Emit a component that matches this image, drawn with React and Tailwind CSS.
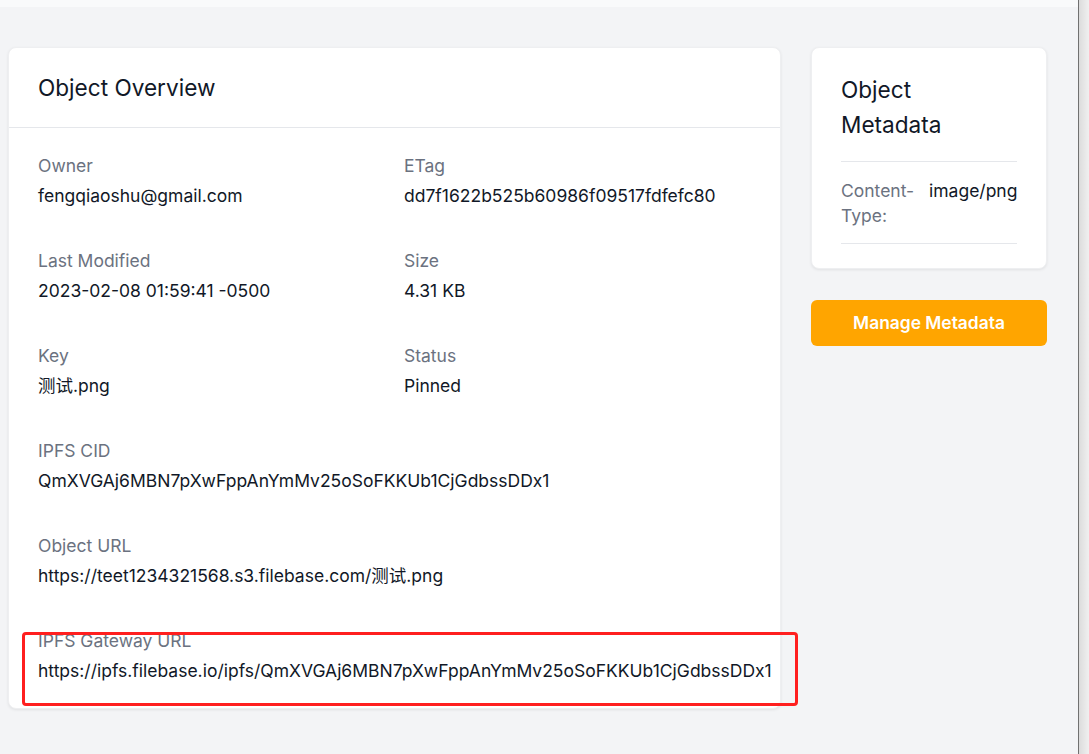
export default function App() {
  const fields = [
    ["Owner", "fengqiaoshu@gmail.com"],
    ["ETag", "dd7f1622b525b60986f09517fdfefc80"],
    ["Last Modified", "2023-02-08 01:59:41 -0500"],
    ["Size", "4.31 KB"],
    ["Key", "测试.png"],
    ["Status", "Pinned"],
  ];
  const wide = [
    ["IPFS CID", "QmXVGAj6MBN7pXwFppAnYmMv25oSoFKKUb1CjGdbssDDx1"],
    ["Object URL", "https://teet1234321568.s3.filebase.com/测试.png"],
    ["IPFS Gateway URL", "https://ipfs.filebase.io/ipfs/QmXVGAj6MBN7pXwFppAnYmMv25oSoFKKUb1CjGdbssDDx1"],
  ];
  return (
    <div
      className="flex w-full h-[754px] overflow-hidden text-[17.5px] leading-[24px] text-[#111827]"
      style={{ fontFamily: 'Inter, "Noto Sans CJK SC", sans-serif' }}
    >
      <div className="flex-1 bg-[#f3f4f6] flex flex-col">
        <div className="h-[7px] bg-[#f9fafb]" />
        <div className="flex pl-[8px] pt-[40px] gap-[30px]">
          <div className="relative w-[773px] h-fit bg-white rounded-lg shadow-[0_1px_3px_rgba(0,0,0,0.08)] border border-[#eeeff1]">
            <div className="h-[80px] flex items-center px-[29px] border-b border-[#e5e7eb]">
              <h2 className="text-[22.6px] leading-[35px] font-normal">Object Overview</h2>
            </div>
            <div className="px-[29px] pt-[26px] pb-[25px] grid grid-cols-[366px_1fr] gap-y-[41px]">
              {fields.map(([k, v]) => (
                <div key={k} className="flex flex-col gap-[6px]">
                  <div className="text-[#6b7280]">{k}</div>
                  <div className="whitespace-nowrap">{v}</div>
                </div>
              ))}
              {wide.map(([k, v]) => (
                <div key={k} className="col-span-2 flex flex-col gap-[6px]">
                  <div className="text-[#6b7280]">{k}</div>
                  <div className="whitespace-nowrap">{v}</div>
                </div>
              ))}
            </div>
            <div className="absolute left-[13px] top-[584px] w-[776px] h-[74px] border-[3px] border-[#ff1f1f] rounded-[4px]" />
          </div>
          <div className="w-[236px] flex flex-col gap-[31px]">
            <div className="bg-white rounded-lg shadow-[0_1px_3px_rgba(0,0,0,0.08)] border border-[#eeeff1] px-[29px] pt-[24px] pb-[24px]">
              <h3 className="text-[22.6px] leading-[35px] font-normal pb-[19px] border-b border-[#e5e7eb]">
                Object Metadata
              </h3>
              <div className="flex pt-[16px] pb-[15px] border-b border-[#e5e7eb]">
                <div className="w-[80px] shrink-0 text-[#6b7280] leading-[25px]">Content-Type:</div>
                <div className="ml-[8px] whitespace-nowrap leading-[25px]">image/png</div>
              </div>
            </div>
            <button className="h-[46px] w-full rounded-md bg-[#ffa500] text-white font-semibold text-[17.4px]">
              Manage Metadata
            </button>
          </div>
        </div>
      </div>
      <div className="w-[1px] bg-[#707070]" />
      <div className="w-[10px] bg-gradient-to-r from-[#dcdcdc] to-[#f0f0f0]" />
    </div>
  );
}
